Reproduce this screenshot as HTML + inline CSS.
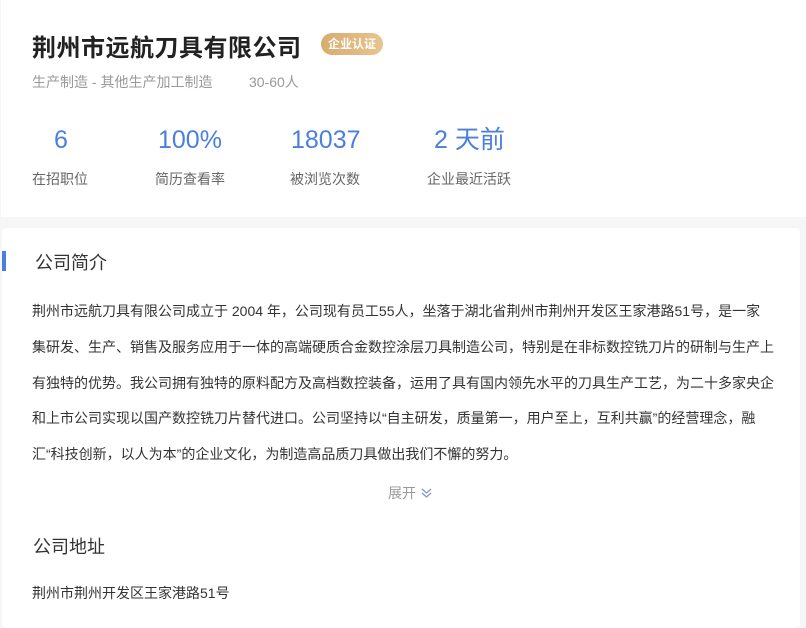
<!DOCTYPE html>
<html><head><meta charset="utf-8"><style>
body{margin:0;width:806px;height:616px;background:#f6f6f7;font-family:"Liberation Sans","Noto Sans CJK SC",sans-serif;overflow:hidden;position:relative}
.c1{position:absolute;left:1px;top:0;width:805px;height:217px;background:#fff}
.c2{position:absolute;left:2px;top:228px;width:798px;height:400px;background:#fff;border-radius:4px}
.a{position:absolute;white-space:nowrap}
.n{position:absolute;white-space:nowrap;top:124px;height:32px;line-height:32px;font-size:25px;color:#4a7fe0}
</style></head><body>
<div class="c1"></div><div class="c2"></div>
<div class="a" style="left:32px;top:28px;font-size:24px;font-weight:bold;color:#222;letter-spacing:0.5px">荆州市远航刀具有限公司</div>
<div class="a" style="left:321px;top:33px;width:62px;height:22px;border-radius:11px;background:linear-gradient(90deg,#d7ac6e,#e8c48f);color:#fff;font-size:12px;font-weight:bold;line-height:22px;text-align:center">企业认证</div>
<div class="a" style="left:32px;top:72px;font-size:14px;color:#999">生产制造 - 其他生产加工制造</div>
<div class="a" style="left:249px;top:72px;font-size:14px;color:#999">30-60人</div>
<div class="n" style="left:54px">6</div>
<div class="n" style="left:158px">100%</div>
<div class="n" style="left:291px">18037</div>
<div class="n" style="left:434px"><span style="vertical-align:top">2 天前</span></div>
<div class="a" style="left:32px;top:169px;font-size:14px;color:#666">在招职位</div>
<div class="a" style="left:155px;top:169px;font-size:14px;color:#666">简历查看率</div>
<div class="a" style="left:290px;top:169px;font-size:14px;color:#666">被浏览次数</div>
<div class="a" style="left:427px;top:169px;font-size:14px;color:#666">企业最近活跃</div>
<div class="a" style="left:2px;top:251px;width:4px;height:20px;background:#4a7fe0"></div>
<div class="a" style="left:35px;top:249px;font-size:18px;color:#333">公司简介</div>
<div class="a" style="left:32px;top:294px;font-size:14px;color:#333;line-height:35.8px">荆州市远航刀具有限公司成立于 2004 年，公司现有员工55人，坐落于湖北省荆州市荆州开发区王家港路51号，是一家<br>集研发、生产、销售及服务应用于一体的高端硬质合金数控涂层刀具制造公司，特别是在非标数控铣刀片的研制与生产上<br>有独特的优势。我公司拥有独特的原料配方及高档数控装备，运用了具有国内领先水平的刀具生产工艺，为二十多家央企<br>和上市公司实现以国产数控铣刀片替代进口。公司坚持以“自主研发，质量第一，用户至上，互利共赢”的经营理念，融<br>汇“科技创新，以人为本”的企业文化，为制造高品质刀具做出我们不懈的努力。</div>
<div class="a" style="left:388px;top:483px;font-size:14px;color:#999">展开</div>
<svg class="a" style="left:420px;top:486px" width="13" height="13" viewBox="0 0 13 13"><path d="M2 3l4.5 4 4.5-4M2 7l4.5 4 4.5-4" fill="none" stroke="#8a9ad0" stroke-width="1.4"/></svg>
<div class="a" style="left:33px;top:533px;font-size:18px;color:#333">公司地址</div>
<div class="a" style="left:32px;top:583px;font-size:14px;color:#333">荆州市荆州开发区王家港路51号</div>
</body></html>
